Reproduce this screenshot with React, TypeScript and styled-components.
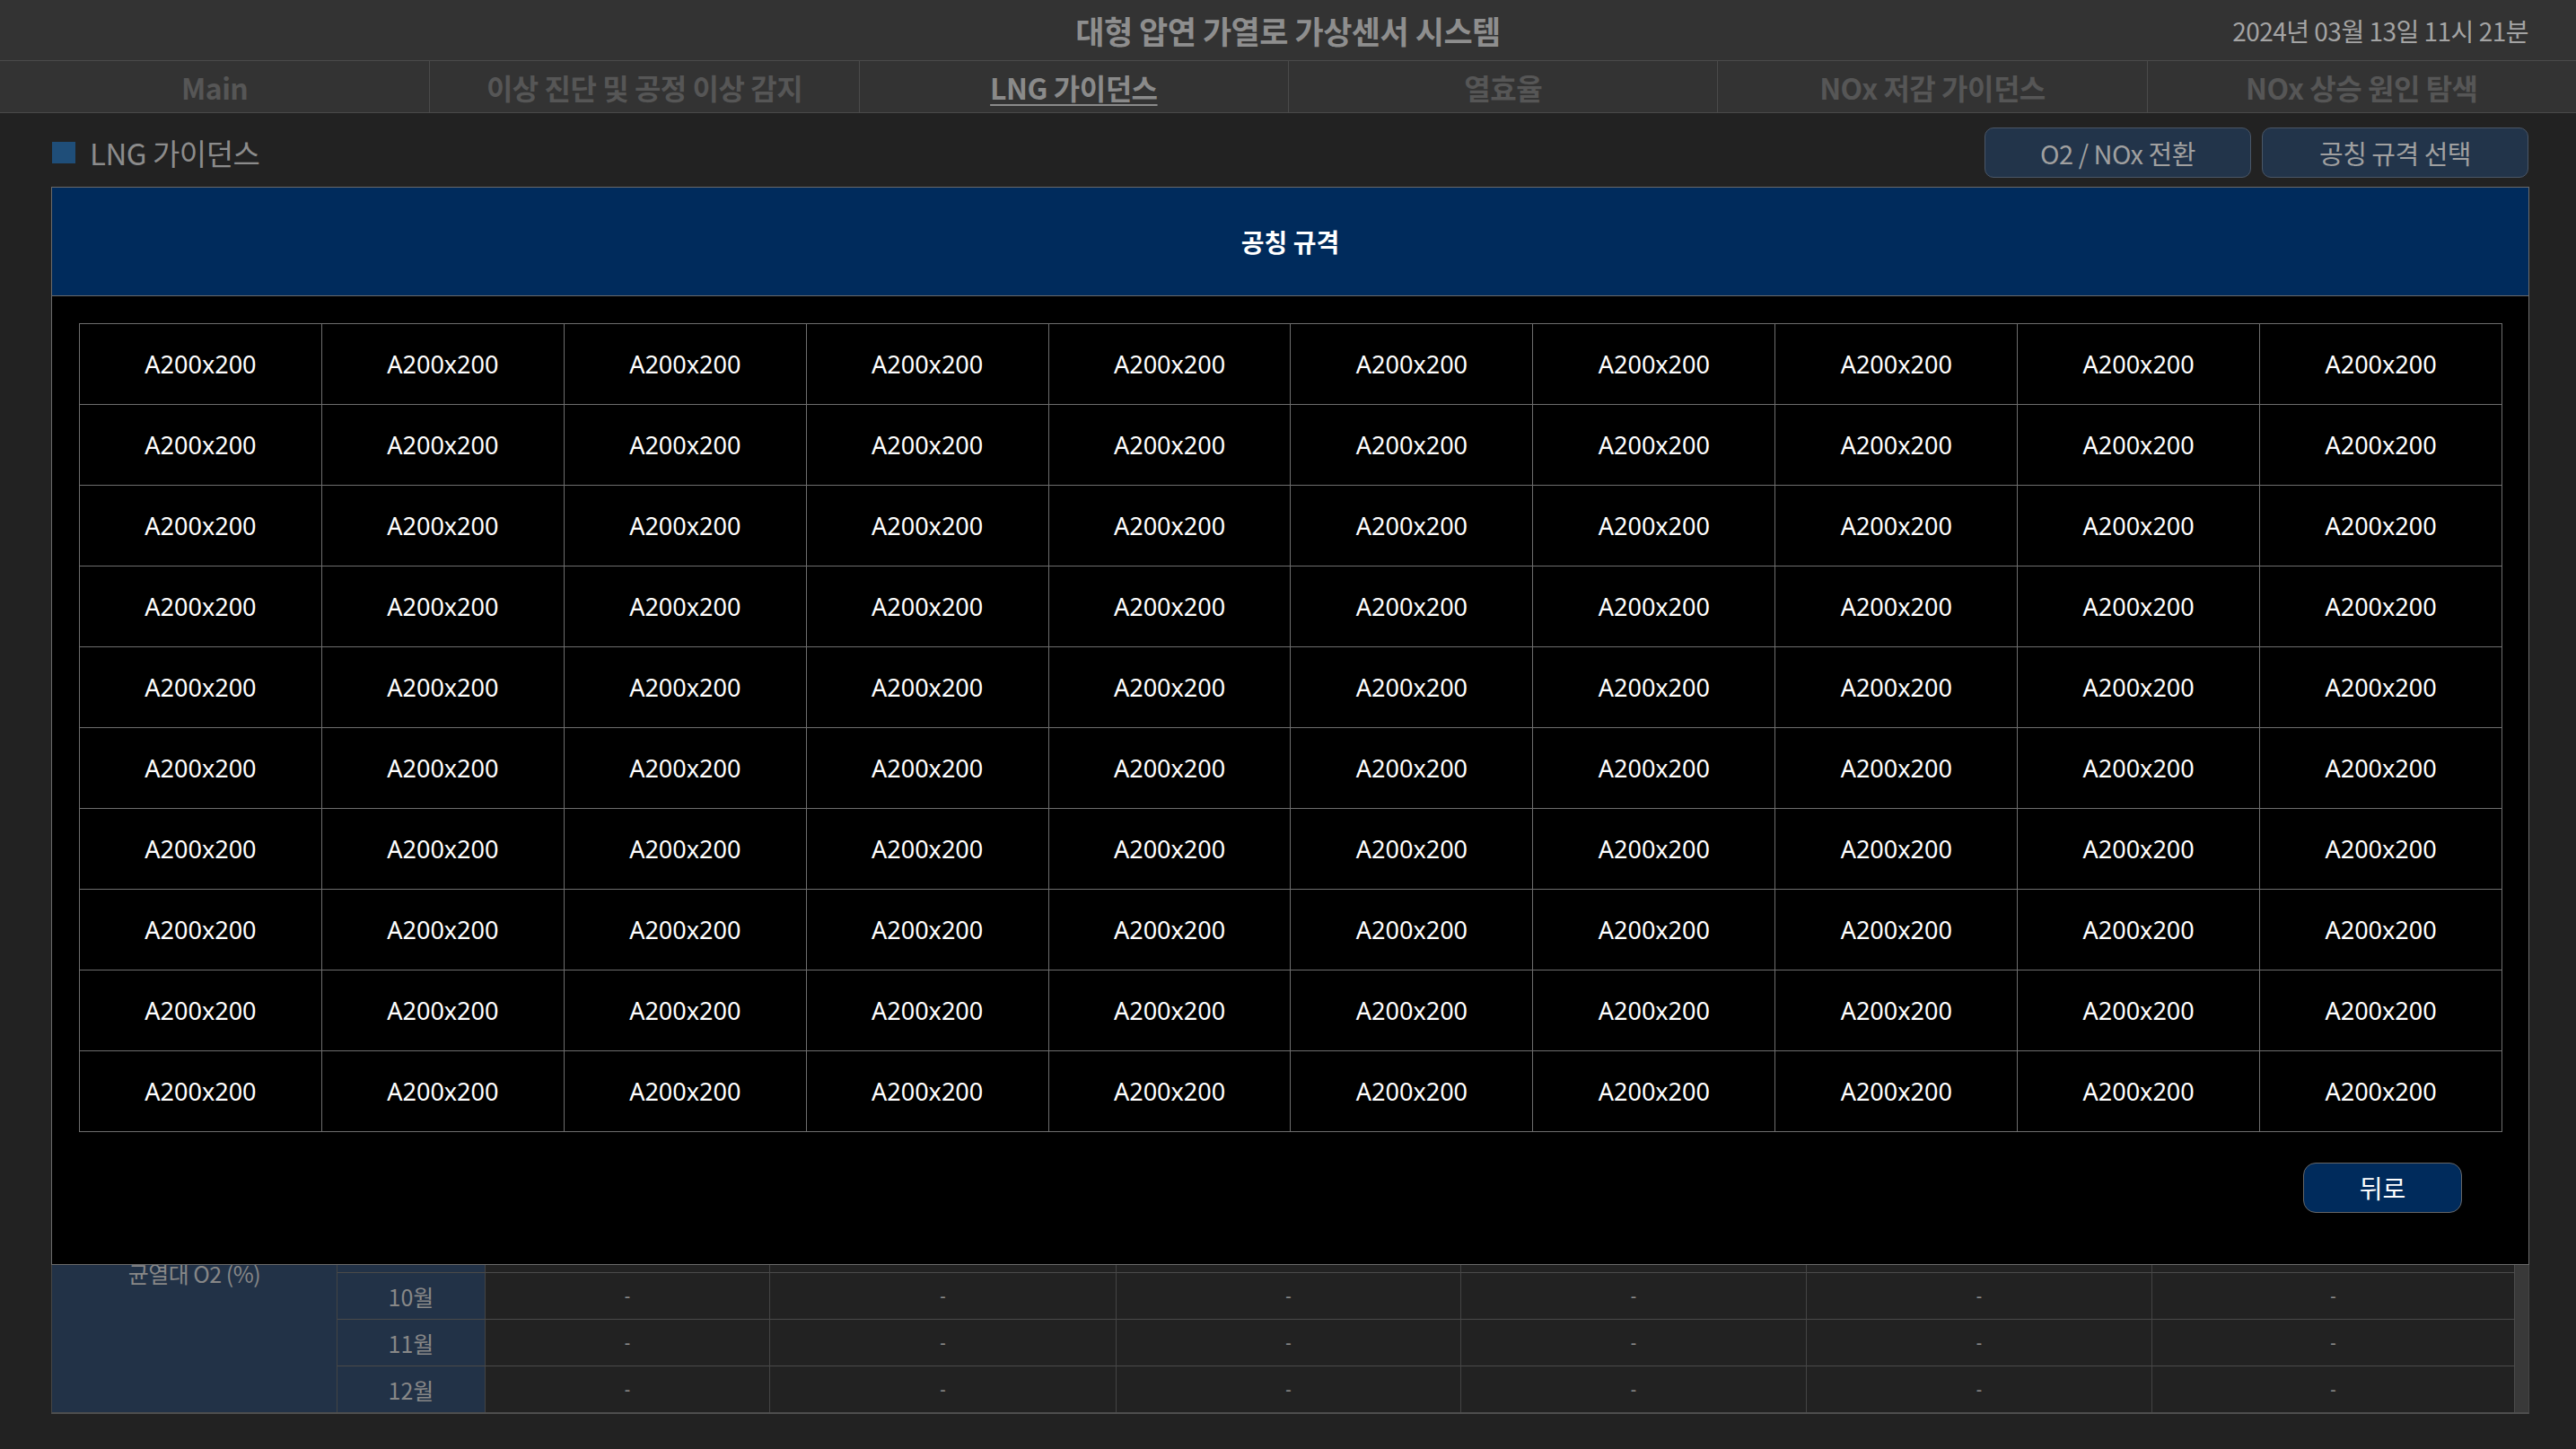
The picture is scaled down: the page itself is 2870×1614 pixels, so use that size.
import React from "react";
import styled, { createGlobalStyle } from "styled-components";

const GlobalStyle = createGlobalStyle`
  html, body {
    margin: 0;
    padding: 0;
    background: #222222;
  }
  body {
    font-family: "Noto Sans", "Noto Sans CJK KR", sans-serif;
  }
  * {
    box-sizing: border-box;
  }
`;

const Page = styled.div`
  width: 2870px;
  height: 1614px;
  background: #222222;
  overflow: hidden;
  display: flex;
  flex-direction: column;
`;

const Header = styled.header`
  height: 67px;
  background: #333333;
  display: grid;
  grid-template-columns: 1fr auto 1fr;
  align-items: center;
`;

const Title = styled.h1`
  grid-column: 2;
  margin: 0;
  font-family: "Noto Sans CJK KR", sans-serif;
  font-size: 35px;
  font-weight: 700;
  color: #8e8e8e;
  letter-spacing: -0.5px;
`;

const DateText = styled.div`
  grid-column: 3;
  justify-self: end;
  padding-right: 53px;
  font-family: "Noto Sans CJK KR", sans-serif;
  font-size: 28px;
  color: #a4a4a4;
  letter-spacing: -0.5px;
`;

const TabBar = styled.nav`
  height: 59px;
  background: #333333;
  border-top: 1px solid #4a4a4a;
  border-bottom: 1px solid #4a4a4a;
  display: grid;
  grid-template-columns: repeat(6, 1fr);
`;

const Tab = styled.div<{ $active?: boolean }>`
  display: flex;
  align-items: center;
  justify-content: center;
  font-family: "Noto Sans CJK KR", sans-serif;
  font-size: 32px;
  font-weight: 700;
  letter-spacing: -0.5px;
  color: ${(p) => (p.$active ? "#8a8a8a" : "#565656")};
  text-decoration: ${(p) => (p.$active ? "underline" : "none")};
  text-decoration-thickness: 2px;
  text-underline-offset: 5px;
  & + & {
    border-left: 1px solid #4a4a4a;
  }
`;

const SectionBar = styled.div`
  display: flex;
  align-items: center;
  justify-content: space-between;
  padding: 16px 53px 10px 58px;
`;

const SectionTitle = styled.div`
  display: flex;
  align-items: center;
  gap: 16px;
  font-family: "Noto Sans CJK KR", sans-serif;
  font-size: 33px;
  color: #8c8c8c;
  letter-spacing: -0.5px;
`;

const TitleMark = styled.span`
  width: 26px;
  height: 24px;
  background: #1f4e79;
`;

const ActionGroup = styled.div`
  display: flex;
  gap: 12px;
`;

const ActionButton = styled.button`
  width: 297px;
  height: 56px;
  background: #22344a;
  border: 1.5px solid #4a5666;
  border-radius: 10px;
  color: #a0a0a0;
  font-family: "Noto Sans CJK KR", sans-serif;
  font-size: 29px;
  letter-spacing: -0.5px;
  padding: 0;
`;

const ContentArea = styled.div`
  position: relative;
  height: 1367px;
  margin: 0 52px 0 57px;
`;

const ScrollBox = styled.div`
  height: 100%;
  border: 1px solid #454545;
  border-bottom: 2px solid #4e4e4e;
  display: flex;
  overflow: hidden;
`;

const TableViewport = styled.div`
  flex: 1;
  min-width: 0;
  display: flex;
  flex-direction: column;
  justify-content: flex-end;
  overflow: hidden;
`;

const ScrollTrack = styled.div`
  width: 16px;
  flex-shrink: 0;
  background: #393939;
  border-left: 1px solid #4c4c4c;
`;

const DataTable = styled.table`
  width: 100%;
  border-collapse: separate;
  border-spacing: 0;
  table-layout: fixed;
`;

const Col = styled.col<{ $w?: number }>`
  width: ${(p) => (p.$w ? `${p.$w}px` : "auto")};
`;

const HeadCell = styled.th`
  box-sizing: content-box;
  height: 51px;
  padding: 0;
  background: #223247;
  border-right: 1px solid #444444;
  border-bottom: 1px solid #4a4a4a;
  font-family: "Noto Sans CJK KR", sans-serif;
  font-size: 25px;
  font-weight: 400;
  color: #8a8a8a;
  &:last-child {
    border-right: none;
  }
`;

const GroupCell = styled.td<{ $last?: boolean }>`
  box-sizing: content-box;
  padding: 0;
  background: #223247;
  border-right: 1px solid #444444;
  border-bottom: ${(p) => (p.$last ? "none" : "1px solid #4a4a4a")};
  text-align: center;
  vertical-align: middle;
  font-family: "Noto Sans CJK KR", sans-serif;
  font-size: 25px;
  color: #878787;
  letter-spacing: -0.5px;
`;

const MonthCell = styled.td<{ $last?: boolean }>`
  box-sizing: content-box;
  height: 51px;
  padding: 0;
  background: #223247;
  border-right: 1px solid #444444;
  border-bottom: ${(p) => (p.$last ? "none" : "1px solid #4a4a4a")};
  text-align: center;
  font-family: "Noto Sans CJK KR", sans-serif;
  font-size: 25px;
  color: #888888;
`;

const ValueCell = styled.td<{ $last?: boolean }>`
  box-sizing: content-box;
  height: 51px;
  padding: 0;
  background: #222222;
  border-right: 1px solid #444444;
  border-bottom: ${(p) => (p.$last ? "none" : "1px solid #4a4a4a")};
  text-align: center;
  font-family: "Noto Sans", sans-serif;
  font-size: 20px;
  color: #8a8a8a;
  &:last-child {
    border-right: none;
  }
`;

const Modal = styled.div`
  position: absolute;
  top: 0;
  left: 0;
  right: 0;
  height: 1201px;
  background: #000000;
  border: 1px solid #6a6a6a;
  display: flex;
  flex-direction: column;
`;

const ModalHeader = styled.div`
  height: 121px;
  flex-shrink: 0;
  background: #002b5c;
  border-bottom: 1px solid #6a6a6a;
  display: flex;
  align-items: center;
  justify-content: center;
  font-family: "Noto Sans CJK KR", sans-serif;
  font-size: 28px;
  font-weight: 700;
  color: #ffffff;
`;

const ModalBody = styled.div`
  padding: 30px 29px 0 30px;
  display: flex;
  flex-direction: column;
`;

const SizeGrid = styled.div`
  display: grid;
  grid-template-columns: repeat(10, 1fr);
  border-top: 1px solid #6e6e6e;
  border-left: 1px solid #6e6e6e;
`;

const SizeCell = styled.div`
  height: 90px;
  display: flex;
  align-items: center;
  justify-content: center;
  border-right: 1px solid #6e6e6e;
  border-bottom: 1px solid #6e6e6e;
  font-family: "Noto Sans", sans-serif;
  font-size: 27px;
  color: #ffffff;
`;

const ModalFooter = styled.div`
  display: flex;
  justify-content: flex-end;
  padding: 34px 45px 0 0;
`;

const BackButton = styled.button`
  width: 177px;
  height: 56px;
  background: #002b5c;
  border: 1.5px solid #666666;
  border-radius: 14px;
  color: #ffffff;
  font-family: "Noto Sans CJK KR", sans-serif;
  font-size: 28px;
  padding: 0;
`;

const tabs = [
  "Main",
  "이상 진단 및 공정 이상 감지",
  "LNG 가이던스",
  "열효율",
  "NOx 저감 가이던스",
  "NOx 상승 원인 탐색",
];

const groups = ["예열대 O2 (%)", "가열대 O2 (%)", "균열대 NOx (ppm)", "균열대 O2 (%)"];
const months = ["7월", "8월", "9월", "10월", "11월", "12월"];
const valueHeads = ["1호기", "2호기", "3호기", "4호기", "5호기", "6호기"];
const colWidths = [318, 165, 317, 386, 384, 385, 385];

export default function App() {
  return (
    <Page>
      <GlobalStyle />
      <Header>
        <Title>대형 압연 가열로 가상센서 시스템</Title>
        <DateText>2024년 03월 13일 11시 21분</DateText>
      </Header>
      <TabBar>
        {tabs.map((t) => (
          <Tab key={t} $active={t === "LNG 가이던스"}>
            {t}
          </Tab>
        ))}
      </TabBar>
      <SectionBar>
        <SectionTitle>
          <TitleMark />
          LNG 가이던스
        </SectionTitle>
        <ActionGroup>
          <ActionButton>O2 / NOx 전환</ActionButton>
          <ActionButton>공칭 규격 선택</ActionButton>
        </ActionGroup>
      </SectionBar>
      <ContentArea>
        <ScrollBox>
          <TableViewport>
            <DataTable>
              <colgroup>
                {colWidths.map((w, i) => (
                  <Col key={i} $w={w} />
                ))}
                <Col />
              </colgroup>
              <thead>
                <tr>
                  <HeadCell>구분</HeadCell>
                  <HeadCell>월</HeadCell>
                  {valueHeads.map((h) => (
                    <HeadCell key={h}>{h}</HeadCell>
                  ))}
                </tr>
              </thead>
              <tbody>
                {groups.map((g, gi) =>
                  months.map((m, mi) => {
                    const lastGroup = gi === groups.length - 1;
                    const last = lastGroup && mi === months.length - 1;
                    return (
                      <tr key={g + m}>
                        {mi === 0 && (
                          <GroupCell rowSpan={months.length} $last={lastGroup}>
                            {g}
                          </GroupCell>
                        )}
                        <MonthCell $last={last}>{m}</MonthCell>
                        {valueHeads.map((h) => (
                          <ValueCell key={h} $last={last}>
                            -
                          </ValueCell>
                        ))}
                      </tr>
                    );
                  })
                )}
              </tbody>
            </DataTable>
          </TableViewport>
          <ScrollTrack />
        </ScrollBox>
        <Modal>
          <ModalHeader>공칭 규격</ModalHeader>
          <ModalBody>
            <SizeGrid>
              {Array.from({ length: 100 }).map((_, i) => (
                <SizeCell key={i}>A200x200</SizeCell>
              ))}
            </SizeGrid>
            <ModalFooter>
              <BackButton>뒤로</BackButton>
            </ModalFooter>
          </ModalBody>
        </Modal>
      </ContentArea>
    </Page>
  );
}
